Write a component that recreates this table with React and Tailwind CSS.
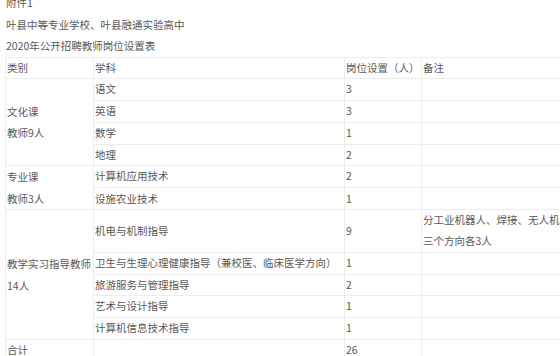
const rows = [
  { cat: '文化课\n教师9人', span: 4, subject: '语文', num: '3' },
  { subject: '英语', num: '3' },
  { subject: '数学', num: '1' },
  { subject: '地理', num: '2' },
  { cat: '专业课\n教师3人', span: 2, subject: '计算机应用技术', num: '2' },
  { subject: '设施农业技术', num: '1' },
  { cat: '教学实习指导教师\n14人', span: 5, subject: '机电与机制指导', num: '9', note: '分工业机器人、焊接、无人机三个方向各3人' },
  { subject: '卫生与生理心理健康指导（兼校医、临床医学方向）', num: '1' },
  { subject: '旅游服务与管理指导', num: '2' },
  { subject: '艺术与设计指导', num: '1' },
  { subject: '计算机信息技术指导', num: '1' },
]

const td = 'border border-[#ececec] px-[1px] py-0 align-middle text-left font-normal'

export default function App() {
  return (
    <div
      className="w-[560px] h-[356px] overflow-hidden bg-white text-[#585858] text-[10.5px] leading-[21.6px]"
      style={{ fontFamily: '"Noto Sans CJK SC", "Noto Sans", sans-serif' }}
    >
      <div className="-mt-[8px] pl-[6px]">
        <p>附件1</p>
        <p>叶县中等专业学校、叶县融通实验高中</p>
        <p>2020年公开招聘教师岗位设置表</p>
      </div>
      <table className="ml-[5px] border-collapse table-fixed w-[562px] leading-[20.7px] whitespace-nowrap">
        <colgroup>
          <col className="w-[88px]" />
          <col className="w-[251px]" />
          <col className="w-[77px]" />
          <col className="w-[146px]" />
        </colgroup>
        <tbody>
          <tr>
            <th className={td}>类别</th>
            <th className={td}>学科</th>
            <th className={td}>岗位设置（人）</th>
            <th className={td}>备注</th>
          </tr>
          {rows.map((r, i) => (
            <tr key={i}>
              {r.cat && (
                <td rowSpan={r.span} className={td}>
                  {r.cat.split('\n').map((l, j) => (
                    <div key={j} className="leading-[21.6px]">{l}</div>
                  ))}
                </td>
              )}
              <td className={td}>{r.subject}</td>
              <td className={td}>{r.num}</td>
              <td className={`${td} whitespace-normal`}>{r.note}</td>
            </tr>
          ))}
          <tr>
            <td className={td}>合计</td>
            <td className={td}></td>
            <td className={td}>26</td>
            <td className={td}></td>
          </tr>
        </tbody>
      </table>
    </div>
  )
}
